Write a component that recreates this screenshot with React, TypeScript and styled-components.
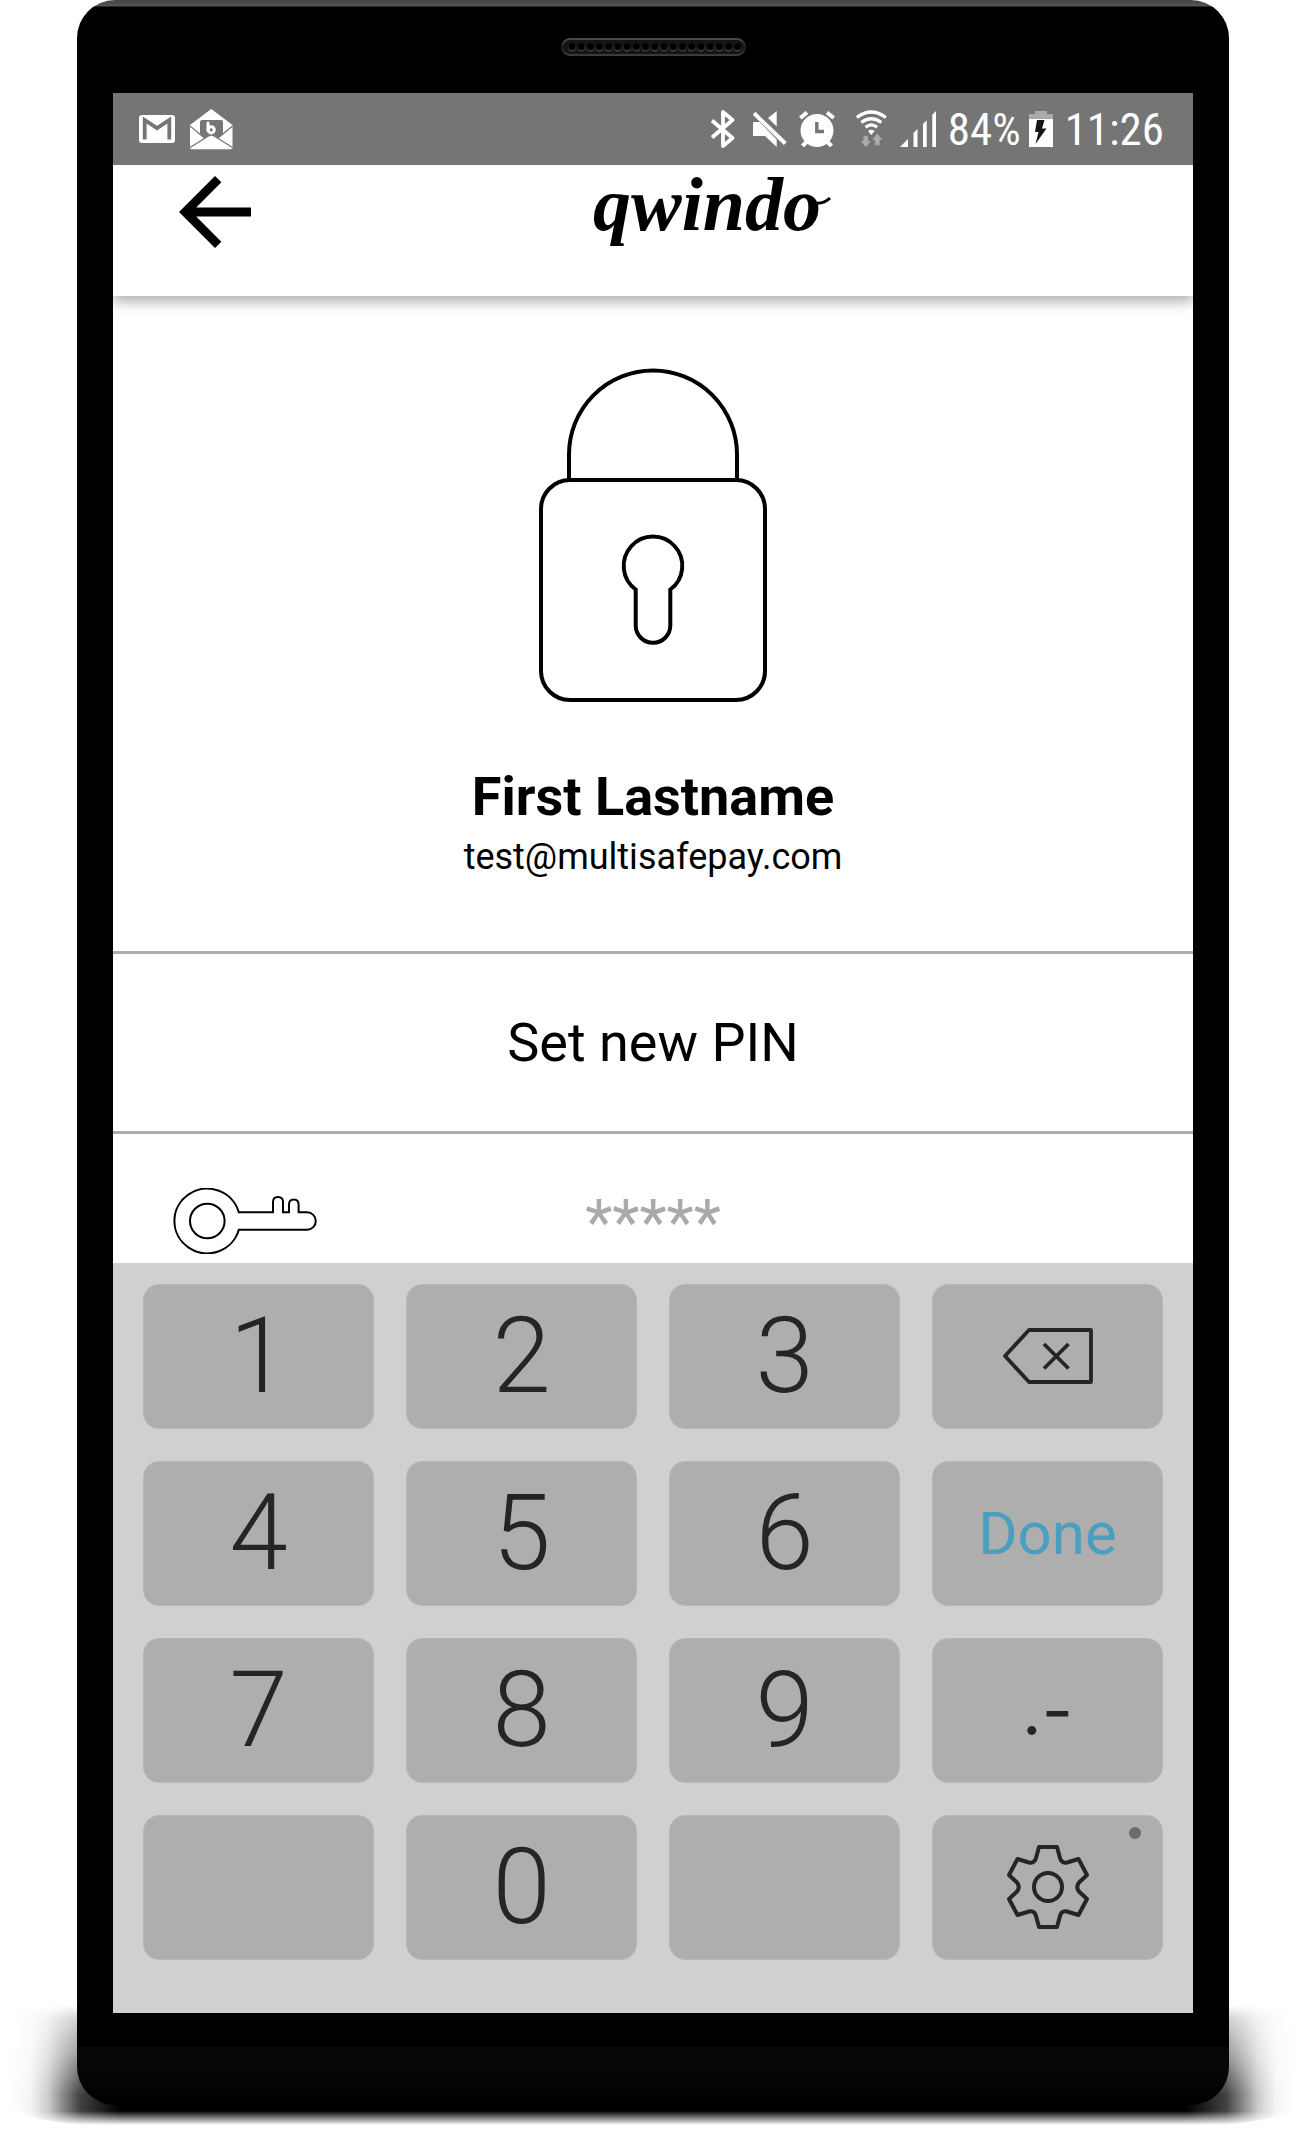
import React from "react";
import styled, { createGlobalStyle, css } from "styled-components";

const GlobalStyle = createGlobalStyle`
  *, *::before, *::after { box-sizing: border-box; }
  body { margin: 0; background: #fff; font-family: Roboto, "Liberation Sans", sans-serif; color: #000; }
  button, input { font: inherit; color: inherit; margin: 0; padding: 0; border: 0; background: none; }
  svg { display: block; flex: none; }
`;

const Stage = styled.main`
  padding: 0 76px 25px 77px;
  overflow: hidden;
`;

const Phone = styled.div`
  position: relative;
  max-width: 1152px;
  margin: 0 auto;
`;

const GroundShadow = styled.div`
  position: absolute;
  left: -67px;
  right: -67px;
  bottom: -22px;
  height: 122px;
  border-radius: 0 0 120px 120px / 0 0 24px 24px;
  background: linear-gradient(
    to right,
    transparent,
    rgba(0, 0, 0, 0.04) 20px,
    rgba(0, 0, 0, 0.2) 38px,
    rgba(0, 0, 0, 0.48) 54px,
    rgba(0, 0, 0, 0.74) 70px,
    #000 110px,
    #000 calc(100% - 110px),
    rgba(0, 0, 0, 0.74) calc(100% - 70px),
    rgba(0, 0, 0, 0.48) calc(100% - 54px),
    rgba(0, 0, 0, 0.2) calc(100% - 38px),
    rgba(0, 0, 0, 0.04) calc(100% - 20px),
    transparent
  );
  mask-image: linear-gradient(
    to bottom,
    transparent,
    rgba(0, 0, 0, 0.25) 14px,
    rgba(0, 0, 0, 0.55) 50px,
    #000 90px,
    #000 106px,
    transparent 120px
  );
`;

const Body = styled.div`
  position: relative;
  display: flex;
  flex-direction: column;
  padding: 0 36px;
  border-radius: 38px;
  background:
    linear-gradient(#070707, #060606 50%, #000) bottom / 100% 58px no-repeat,
    linear-gradient(#444, #555 6px, #000 7px) top / 100% 8px no-repeat,
    #000;
`;

const TopBezel = styled.div`
  height: 93px;
  display: flex;
  align-items: center;
  justify-content: center;
`;

const BottomBezel = styled.div`
  height: 92px;
`;

const Screen = styled.div`
  display: flex;
  flex-direction: column;
  background: #fff;
`;

const StatusBar = styled.div`
  position: relative;
  z-index: 1;
  display: flex;
  align-items: center;
  justify-content: space-between;
  height: 72px;
  padding: 0 29px 0 26px;
  background: #757575;
  color: #fff;
`;

const StatusGroup = styled.div<{ $gap: number }>`
  display: flex;
  align-items: center;
  gap: ${(p) => p.$gap}px;
`;

const StatusText = styled.span`
  font-family: "Roboto Condensed", "Liberation Sans Narrow", Roboto, sans-serif;
  font-size: 45px;
  line-height: 52px;
  padding-top: 2px;
`;

const Header = styled.header`
  display: grid;
  grid-template-columns: 4fr 5fr;
  align-items: start;
  height: 131px;
  box-shadow: 0 6px 12px rgba(0, 0, 0, 0.3);
`;

const BackButton = styled.button`
  justify-self: start;
  margin: 11px 0 0 66px;
  cursor: pointer;
`;

const Logo = styled.div`
  display: flex;
  align-items: flex-start;
  font-family: "Liberation Serif", serif;
  font-size: 76px;
  font-weight: 700;
  font-style: italic;
  line-height: 78px;
`;

const Profile = styled.section`
  display: flex;
  flex-direction: column;
  align-items: center;
  padding: 72px 0 71px;
`;

const Name = styled.h1`
  margin: 63px 0 5px;
  font-size: 54px;
  font-weight: 700;
  line-height: 64px;
`;

const Email = styled.p`
  margin: 0;
  font-size: 36px;
  line-height: 46px;
`;

const PinTitle = styled.label`
  display: flex;
  align-items: center;
  justify-content: center;
  height: 183px;
  border: solid #acacac;
  border-width: 3px 0;
  font-size: 54px;
  line-height: 64px;
`;

const PinRow = styled.div`
  display: grid;
  grid-template-columns: 148px 1fr 148px;
  align-items: start;
  height: 129px;
  padding: 54px 58px 0;
`;

const PinInput = styled.input`
  width: 100%;
  height: 68px;
  font-size: 63px;
  text-align: center;
  outline: none;
  &::placeholder {
    color: #aaa;
    opacity: 1;
  }
`;

const Keyboard = styled.div`
  display: grid;
  grid-template-columns: repeat(4, 1fr);
  grid-auto-rows: 145px;
  gap: 32px;
  padding: 21px 30px 53px;
  background: #d0d0d0;
`;

const keyFace = {
  digit: css`
    font-size: 105px;
    font-weight: 300;
  `,
  action: css`
    font-size: 60px;
    color: #4a9fc0;
  `,
  symbol: css`
    font-family: Inter, Roboto, sans-serif;
    font-size: 68px;
    padding-bottom: 2px;
  `,
};

const Key = styled.button<{ $face: keyof typeof keyFace }>`
  position: relative;
  display: flex;
  align-items: center;
  justify-content: center;
  border-radius: 16px;
  background: #aeaeae;
  border: 1px solid #b7b7b7;
  color: #252525;
  line-height: 120px;
  cursor: pointer;
  ${(p) => keyFace[p.$face]}
`;

const KeyDot = styled.span`
  position: absolute;
  top: 11px;
  right: 21px;
  width: 12px;
  height: 12px;
  border-radius: 50%;
  background: #6b6b6b;
`;

const Speaker = () => (
  <svg width="185" height="18" viewBox="0 0 185 18" aria-hidden="true">
    <defs>
      <linearGradient id="rim" x1="0" y1="0" x2="0" y2="1">
        <stop offset="0" stopColor="#4c4c4c" />
        <stop offset="0.5" stopColor="#1c1c1c" />
        <stop offset="1" stopColor="#3c3c3c" />
      </linearGradient>
    </defs>
    <rect x="1" y="1" width="183" height="16" rx="8" fill="#141414" stroke="url(#rim)" strokeWidth="2" />
    {Array.from({ length: 19 }, (_, i) => (
      <g key={i}>
        <circle cx={11 + i * 9.2} cy="9.8" r="3.8" fill="#484848" />
        <circle cx={11 + i * 9.2} cy="8.8" r="3.5" fill="#000" />
      </g>
    ))}
  </svg>
);

const MailIcon = () => (
  <svg width="36" height="28" viewBox="0 0 36 28" aria-label="Gmail">
    <rect width="36" height="28" rx="3" fill="#fff" />
    <path d="M5.7 24.5V5L18 13.2 30.3 5v19.5" fill="none" stroke="#757575" strokeWidth="3.8" />
  </svg>
);

const OpenMailIcon = () => (
  <svg width="43" height="41" viewBox="0 0 43 41" aria-label="Mail app">
    <path d="M21.3 0 42.5 16v23l-1.5 1.3H1L0 39V16z" fill="#fff" />
    <path d="M12 11h19q2 0 2 2v12l-4.5 4-7.2-3.5L14 29l-4-4V13q0-2 2-2z" fill="#757575" />
    <path d="M0 17l14.5 12M42.5 17 28 29M0 38.5 18.5 27q2.8-1.6 5.6 0l18.4 11.5" fill="none" stroke="#757575" strokeWidth="1.3" />
    <path d="M18 14v7.5" stroke="#fff" strokeWidth="3" strokeLinecap="round" />
    <circle cx="21.2" cy="20.8" r="3.1" fill="none" stroke="#fff" strokeWidth="3" />
  </svg>
);

const BluetoothIcon = () => (
  <svg width="30" height="38" viewBox="0 0 30 38" aria-label="Bluetooth">
    <path d="M1 10.5 21.5 28 12 36V2l9.5 8L1 27.5" fill="none" stroke="#fff" strokeWidth="3.8" strokeLinejoin="round" />
  </svg>
);

const MuteIcon = () => (
  <svg width="34" height="36" viewBox="0 0 34 36" fill="#fff" aria-label="Muted">
    <path d="M23.7 0v15.5L15 7zM0 12q0-1 1-1h5.5L23.7 28.5V36L12 25H1q-1 0-1-1z" />
    <path d="M1 2.3 32.3 32.5" stroke="#fff" strokeWidth="4" />
  </svg>
);

const AlarmIcon = () => (
  <svg width="36" height="36" viewBox="0 0 36 36" fill="none" stroke="#fff" strokeWidth="4" aria-label="Alarm">
    <circle cx="18" cy="19.5" r="16.5" fill="#fff" stroke="none" />
    <path d="M1.3 7 8 1.5M28 1.5 34.7 7M3.5 35 8.5 30M32.5 35l-5-5" />
    <path d="M17.8 11v9.5H25" stroke="#757575" strokeWidth="3.4" />
  </svg>
);

const WifiIcon = () => (
  <svg width="41" height="38" viewBox="-9 0 41 38" fill="none" aria-label="Wi-Fi">
    <g stroke="#fff" strokeWidth="3.2">
      <path d="M.8 7.5Q15.3-3.5 29.8 7.5M5.3 12.5q10-7.5 20 0M9.5 17.2q5.8-4.6 11.6 0" />
    </g>
    <path d="M12 21q3.3-2.5 6.6 0l-3.3 4z" fill="#fff" />
    <path d="M7.5 26H12v5h3l-5.2 6-5.2-6h2.9zM21.3 23.7l5.2 6h-2.9v5.5h-4.6v-5.5h-2.9z" fill="#aaa" />
  </svg>
);

const SignalIcon = () => (
  <svg width="36" height="36" viewBox="0 0 36 36" fill="#fff" aria-label="Signal">
    <path d="M0 36l8-8v8zM13.5 22l4-4v18h-4zM23 13l3.7-3.7V36H23zM32.3 3.7 36 0v36h-3.7z" />
  </svg>
);

const BatteryIcon = () => (
  <svg width="24" height="36" viewBox="0 0 24 36" aria-label="Charging">
    <path d="M6 0h12v3h6v5H0V3h6z" fill="#aaa" />
    <path d="M0 8h24v28H0z" fill="#fff" />
    <path d="M8 9h7.5l-2.5 8.5h4.5L6.5 33l3-12H6z" fill="#151515" />
  </svg>
);

const ArrowIcon = () => (
  <svg width="72" height="72" viewBox="4 4 16 16" aria-hidden="true">
    <path d="M20 11H7.83l5.59-5.59L12 4l-8 8 8 8 1.41-1.41L7.83 13H20z" />
  </svg>
);

const LogoTail = () => (
  <svg width="9" height="78" viewBox="0 0 9 78" overflow="visible" aria-hidden="true">
    <path d="M-6 38Q3 39 9 33" fill="none" stroke="#000" strokeWidth="3" />
  </svg>
);

const LockIcon = () => (
  <svg width="228" height="334" viewBox="0 0 228 334" fill="none" stroke="#000" strokeWidth="4" aria-hidden="true">
    <path d="M30 112V86.5a84 84 0 0 1 168 0V112" />
    <rect x="2" y="112" width="224" height="220" rx="29" />
    <path d="M96.7 221.5a29.3 29.3 0 1 1 34.6 0V257.5a17.3 17.3 0 0 1-34.6 0z" />
  </svg>
);

const KeyIcon = () => (
  <svg width="148" height="66" viewBox="0 1 148 66" fill="none" stroke="#000" strokeWidth="2" aria-hidden="true">
    <path d="M67.8 25.3H102V15q0-5 5-5t5 5v10.3h6V17.5q0-5 4.8-5t4.8 5v7.8h8.5a8.7 8.7 0 0 1 0 17.4H67.8a32.8 32.3 0 1 1 0-17.4z" />
    <circle cx="36.3" cy="34" r="17.3" />
  </svg>
);

const BackspaceIcon = () => (
  <svg width="90" height="56" viewBox="0 0 90 56" fill="none" stroke="#252525" strokeWidth="3.8" strokeLinejoin="round" aria-hidden="true">
    <path d="M2 28 26 2h62v52H26z" />
    <path d="M41 16l24.5 24.5M65.5 16 41 40.5" />
  </svg>
);

const GearIcon = () => (
  <svg width="84" height="84" viewBox="-42 -42 84 84" fill="none" stroke="#252525" strokeWidth="4" strokeLinejoin="round" aria-hidden="true">
    <path d="M-9-40H9L12-29Q13.5-23.5 19-24.5L30.500-28 39-12 31-4.500Q27.500 0 31 4.500L39 12 30.500 28 19 24.500Q13.500 23.500 12 29L9 40H-9L-12 29Q-13.500 23.500-19 24.500L-30.500 28-39 12-31 4.500Q-27.500 0-31-4.500L-39-12-30.500-28-19-24.500Q-13.500-23.500-12-29z" />
    <circle r="14" />
  </svg>
);

type KeySpec = {
  id: string;
  face: keyof typeof keyFace;
  label?: string;
  content?: React.ReactNode;
};

const digit = (n: string): KeySpec => ({ id: n, face: "digit", content: n });

const keys: KeySpec[] = [
  digit("1"),
  digit("2"),
  digit("3"),
  { id: "delete", face: "symbol", label: "Delete", content: <BackspaceIcon /> },
  digit("4"),
  digit("5"),
  digit("6"),
  { id: "done", face: "action", content: "Done" },
  digit("7"),
  digit("8"),
  digit("9"),
  { id: "symbols", face: "symbol", content: ".-" },
  { id: "blank-left", face: "digit", label: "Blank" },
  digit("0"),
  { id: "blank-right", face: "digit", label: "Blank" },
  { id: "settings", face: "symbol", label: "Keyboard settings", content: <><GearIcon /><KeyDot /></> },
];

export default function App() {
  return (
    <>
      <GlobalStyle />
      <Stage>
        <Phone>
          <GroundShadow />
          <Body>
            <TopBezel>
              <Speaker />
            </TopBezel>
            <Screen>
              <StatusBar>
                <StatusGroup $gap={15}>
                  <MailIcon />
                  <OpenMailIcon />
                </StatusGroup>
                <StatusGroup $gap={12}>
                  <BluetoothIcon />
                  <MuteIcon />
                  <AlarmIcon />
                  <WifiIcon />
                  <SignalIcon />
                  <StatusGroup $gap={8}>
                    <StatusText>84%</StatusText>
                    <BatteryIcon />
                  </StatusGroup>
                  <StatusText>11:26</StatusText>
                </StatusGroup>
              </StatusBar>
              <Header>
                <BackButton type="button" aria-label="Back">
                  <ArrowIcon />
                </BackButton>
                <Logo>
                  qwindo
                  <LogoTail />
                </Logo>
              </Header>
              <Profile>
                <LockIcon />
                <Name>First Lastname</Name>
                <Email>test@multisafepay.com</Email>
              </Profile>
              <PinTitle htmlFor="pin">Set new PIN</PinTitle>
              <PinRow>
                <KeyIcon />
                <PinInput id="pin" type="password" inputMode="numeric" placeholder="*****" />
              </PinRow>
              <Keyboard>
                {keys.map((k) => (
                  <Key key={k.id} type="button" $face={k.face} aria-label={k.label}>
                    {k.content}
                  </Key>
                ))}
              </Keyboard>
            </Screen>
            <BottomBezel />
          </Body>
        </Phone>
      </Stage>
    </>
  );
}
